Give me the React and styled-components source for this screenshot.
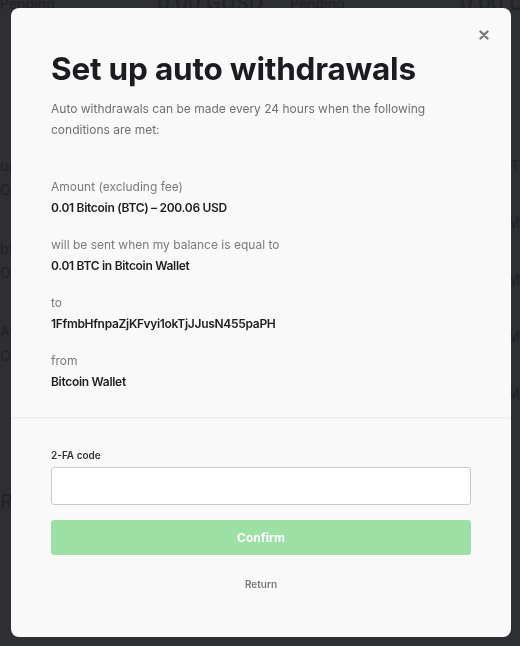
import React from 'react';
import styled, { createGlobalStyle } from 'styled-components';

const GlobalStyle = createGlobalStyle`
  html, body {
    margin: 0;
    padding: 0;
    background: #2e2f33;
    font-family: Inter, "Noto Sans", Arial, sans-serif;
  }
  * { box-sizing: border-box; }
`;

const details = [
  { label: 'Amount (excluding fee)', value: '0.01 Bitcoin (BTC) – 200.06 USD' },
  { label: 'will be sent when my balance is equal to', value: '0.01 BTC in Bitcoin Wallet' },
  { label: 'to', value: '1FfmbHfnpaZjKFvyi1okTjJJusN455paPH' },
  { label: 'from', value: 'Bitcoin Wallet' },
];

const App = () => {
  return (
    <>
      <GlobalStyle />
      <Page>
        <TopRow>
          <Faint>Pending</Faint>
          <Faint size='20px'>0.00 GUSD</Faint>
          <Faint>Pending</Faint>
          <Faint size='20px'>0.00 USD</Faint>
        </TopRow>
        <Columns>
          <SideList>
            <Pair>
              <Faint>up</Faint>
              <Faint>On</Faint>
            </Pair>
            <Pair>
              <Faint>blu</Faint>
              <Faint>Off</Faint>
            </Pair>
            <Pair>
              <Faint>At</Faint>
              <Faint>Off</Faint>
            </Pair>
            <Faint size='20px' spaced>Re</Faint>
          </SideList>
          <SideList align='right'>
            <Faint>T</Faint>
            <Faint>M</Faint>
            <Faint>M</Faint>
            <Faint>M</Faint>
            <Faint>M</Faint>
          </SideList>
        </Columns>
      </Page>

      <Overlay>
        <Modal>
          <Close aria-label='close'>
            <svg width='10' height='10' viewBox='0 0 10 10'>
              <path d='M1.5 1.5 L8.5 8.5 M8.5 1.5 L1.5 8.5' stroke='#7a7a7a' strokeWidth='2.4' strokeLinecap='round' />
            </svg>
          </Close>
          <Body>
            <Title>Set up auto withdrawals</Title>
            <Intro>
              Auto withdrawals can be made every 24 hours when the following
              conditions are met:
            </Intro>
            <DetailList>
              {details.map((d) => (
                <Detail key={d.label}>
                  <DetailLabel>{d.label}</DetailLabel>
                  <DetailValue>{d.value}</DetailValue>
                </Detail>
              ))}
            </DetailList>
          </Body>
          <Footer>
            <FieldLabel>2-FA code</FieldLabel>
            <Input type='text' />
            <ConfirmButton disabled>Confirm</ConfirmButton>
            <ReturnLink>Return</ReturnLink>
          </Footer>
        </Modal>
      </Overlay>
    </>
  );
};
export default App;

const Page = styled.div`
  height: 646px;
  overflow: hidden;
  margin-top: -9px;
`;

const TopRow = styled.div`
  display: grid;
  grid-template-columns: 157px 133px 170px 1fr;
  align-items: center;
  height: 24px;
`;

const Faint = styled.span`
  color: #222327;
  font-size: ${(p) => p.size || '14px'};
  font-weight: 500;
  white-space: nowrap;
  margin-top: ${(p) => (p.spaced ? '84px' : '0')};
`;

const Columns = styled.div`
  display: flex;
  justify-content: space-between;
  padding-top: 142px;
`;

const SideList = styled.div`
  display: flex;
  flex-direction: column;
  gap: ${(p) => (p.align === 'right' ? '40px' : '42px')};
  align-items: ${(p) => (p.align === 'right' ? 'flex-end' : 'flex-start')};
`;

const Pair = styled.div`
  display: flex;
  flex-direction: column;
  gap: 7px;
`;

const Overlay = styled.div`
  position: fixed;
  inset: 0;
  display: flex;
  justify-content: center;
  align-items: flex-start;
  padding: 8px 0 0 2px;
`;

const Modal = styled.div`
  position: relative;
  width: 500px;
  background: #f9f9f9;
  border-radius: 8px;
  overflow: hidden;
`;

const Close = styled.button`
  position: absolute;
  top: 22px;
  right: 22px;
  width: 10px;
  height: 10px;
  padding: 0;
  border: 0;
  background: none;
  display: flex;
  cursor: pointer;
`;

const Body = styled.div`
  padding: 41px 40px 25px;
  border-bottom: 2px solid #efefef;
`;

const Title = styled.h1`
  margin: 0;
  font-size: 31.5px;
  line-height: 40px;
  font-weight: 700;
  color: #1b1b20;
  letter-spacing: -0.2px;
`;

const Intro = styled.p`
  margin: 9px 0 0;
  font-size: 12px;
  line-height: 21px;
  color: #6f6f6f;
`;

const DetailList = styled.div`
  display: flex;
  flex-direction: column;
  gap: 16px;
  margin-top: 36px;
`;

const Detail = styled.div`
  display: flex;
  flex-direction: column;
`;

const DetailLabel = styled.span`
  font-size: 12px;
  line-height: 21px;
  color: #7a7a7a;
`;

const DetailValue = styled.span`
  font-size: 12px;
  line-height: 21px;
  font-weight: 600;
  letter-spacing: -0.3px;
  color: #1e1e22;
`;

const Footer = styled.div`
  padding: 28px 40px 47px;
  display: flex;
  flex-direction: column;
`;

const FieldLabel = styled.label`
  font-size: 10px;
  line-height: 16px;
  font-weight: 600;
  color: #333;
  margin-bottom: 4px;
`;

const Input = styled.input`
  height: 38px;
  width: 100%;
  border: 1px solid #c9c9c9;
  border-radius: 3px;
  background: #fff;
  outline: none;
`;

const ConfirmButton = styled.button`
  margin-top: 15px;
  height: 35px;
  width: 100%;
  border: 0;
  border-radius: 3px;
  background: #9ce0a6;
  color: #fff;
  font-family: inherit;
  font-size: 12px;
  font-weight: 700;
`;

const ReturnLink = styled.a`
  align-self: center;
  margin-top: 23px;
  font-size: 10px;
  font-weight: 600;
  color: #777;
  cursor: pointer;
`;
